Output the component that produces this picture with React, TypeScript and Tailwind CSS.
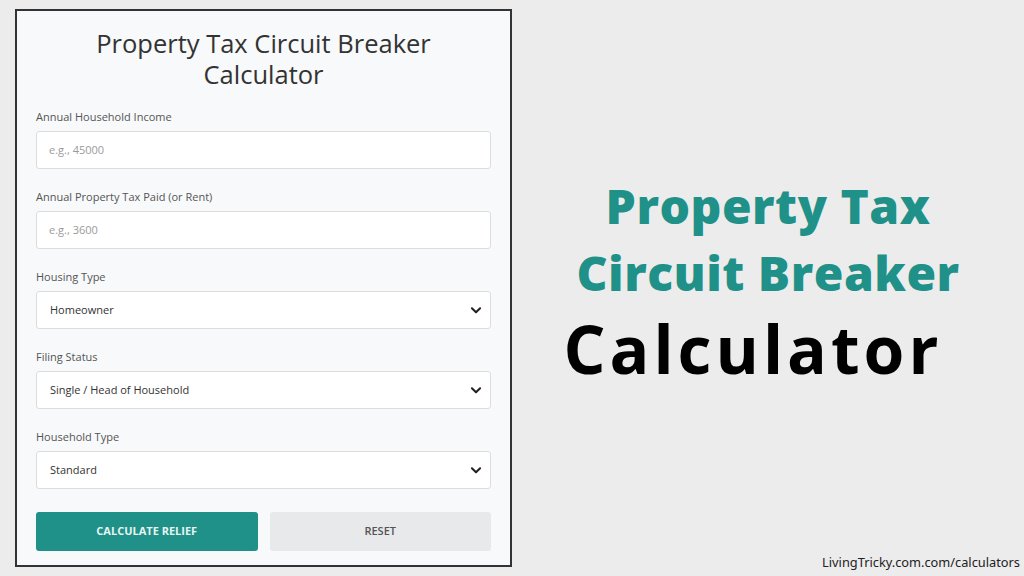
import React from "react";

const Chevron = () => (
  <svg width="14" height="14" viewBox="0 0 24 24" fill="none" stroke="#222" strokeWidth="3.5" strokeLinecap="round" strokeLinejoin="round">
    <path d="M5 9l7 7 7-7" />
  </svg>
);

const Field = ({ label, children }: { label: string; children: React.ReactNode }) => (
  <div className="flex flex-col">
    <div className="text-[11px] leading-[16px] text-[#555] mb-[6px]">{label}</div>
    {children}
  </div>
);

const InputBox = ({ placeholder }: { placeholder: string }) => (
  <div className="h-[38px] rounded-[3px] border border-[#dcdcdc] bg-white flex items-center px-[12px] text-[11px] text-[#9a9a9a]">
    {placeholder}
  </div>
);

const SelectBox = ({ value }: { value: string }) => (
  <div className="h-[38px] rounded-[3px] border border-[#dcdcdc] bg-white flex items-center justify-between pl-[13px] pr-[7px] text-[11px] text-[#333]">
    <span>{value}</span>
    <Chevron />
  </div>
);

export default function App() {
  return (
    <div className="w-[1024px] h-[576px] bg-[#ececec] flex relative overflow-hidden" style={{ fontFamily: "'Open Sans', 'Noto Sans', sans-serif" }}>
      <div className="ml-[15px] mt-[9px] w-[497px] h-[558px] border-2 border-[#333] bg-[#f8f9fa] flex flex-col px-[19px] pt-[17px]">
        <h1 className="text-center text-[25.5px] leading-[31px] text-[#333] mb-[19px]">
          <div>Property Tax Circuit Breaker</div>
          <div>Calculator</div>
        </h1>
        <div className="flex flex-col gap-[20px]">
          <Field label="Annual Household Income">
            <InputBox placeholder="e.g., 45000" />
          </Field>
          <Field label="Annual Property Tax Paid (or Rent)">
            <InputBox placeholder="e.g., 3600" />
          </Field>
          <Field label="Housing Type">
            <SelectBox value="Homeowner" />
          </Field>
          <Field label="Filing Status">
            <SelectBox value="Single / Head of Household" />
          </Field>
          <Field label="Household Type">
            <SelectBox value="Standard" />
          </Field>
        </div>
        <div className="grid grid-cols-2 gap-[12px] mt-[23px]">
          <div className="h-[39px] rounded-[3px] bg-[#1f9188] flex items-center justify-center text-[11px] font-bold text-[#e8f4f2]">
            CALCULATE RELIEF
          </div>
          <div className="h-[39px] rounded-[3px] bg-[#e8e9ea] flex items-center justify-center text-[11px] font-semibold text-[#555]">
            RESET
          </div>
        </div>
      </div>

      <div className="flex-1 flex flex-col items-center pt-[172px]" style={{ fontFamily: "'Open Sans', sans-serif" }}>
        <div className="text-[48px] leading-[67px] font-extrabold text-[#1f9188] text-center tracking-[0.5px]">
          <div>Property Tax</div>
          <div>Circuit Breaker</div>
        </div>
        <div className="text-[66px] leading-[84px] font-bold text-black mr-[30px] tracking-[4px]">Calculator</div>
      </div>

      <div className="absolute right-[4px] bottom-[4px] text-[12.8px] text-[#222]" style={{ fontFamily: "'Noto Sans', sans-serif" }}>
        LivingTricky.com.com/calculators
      </div>
    </div>
  );
}
